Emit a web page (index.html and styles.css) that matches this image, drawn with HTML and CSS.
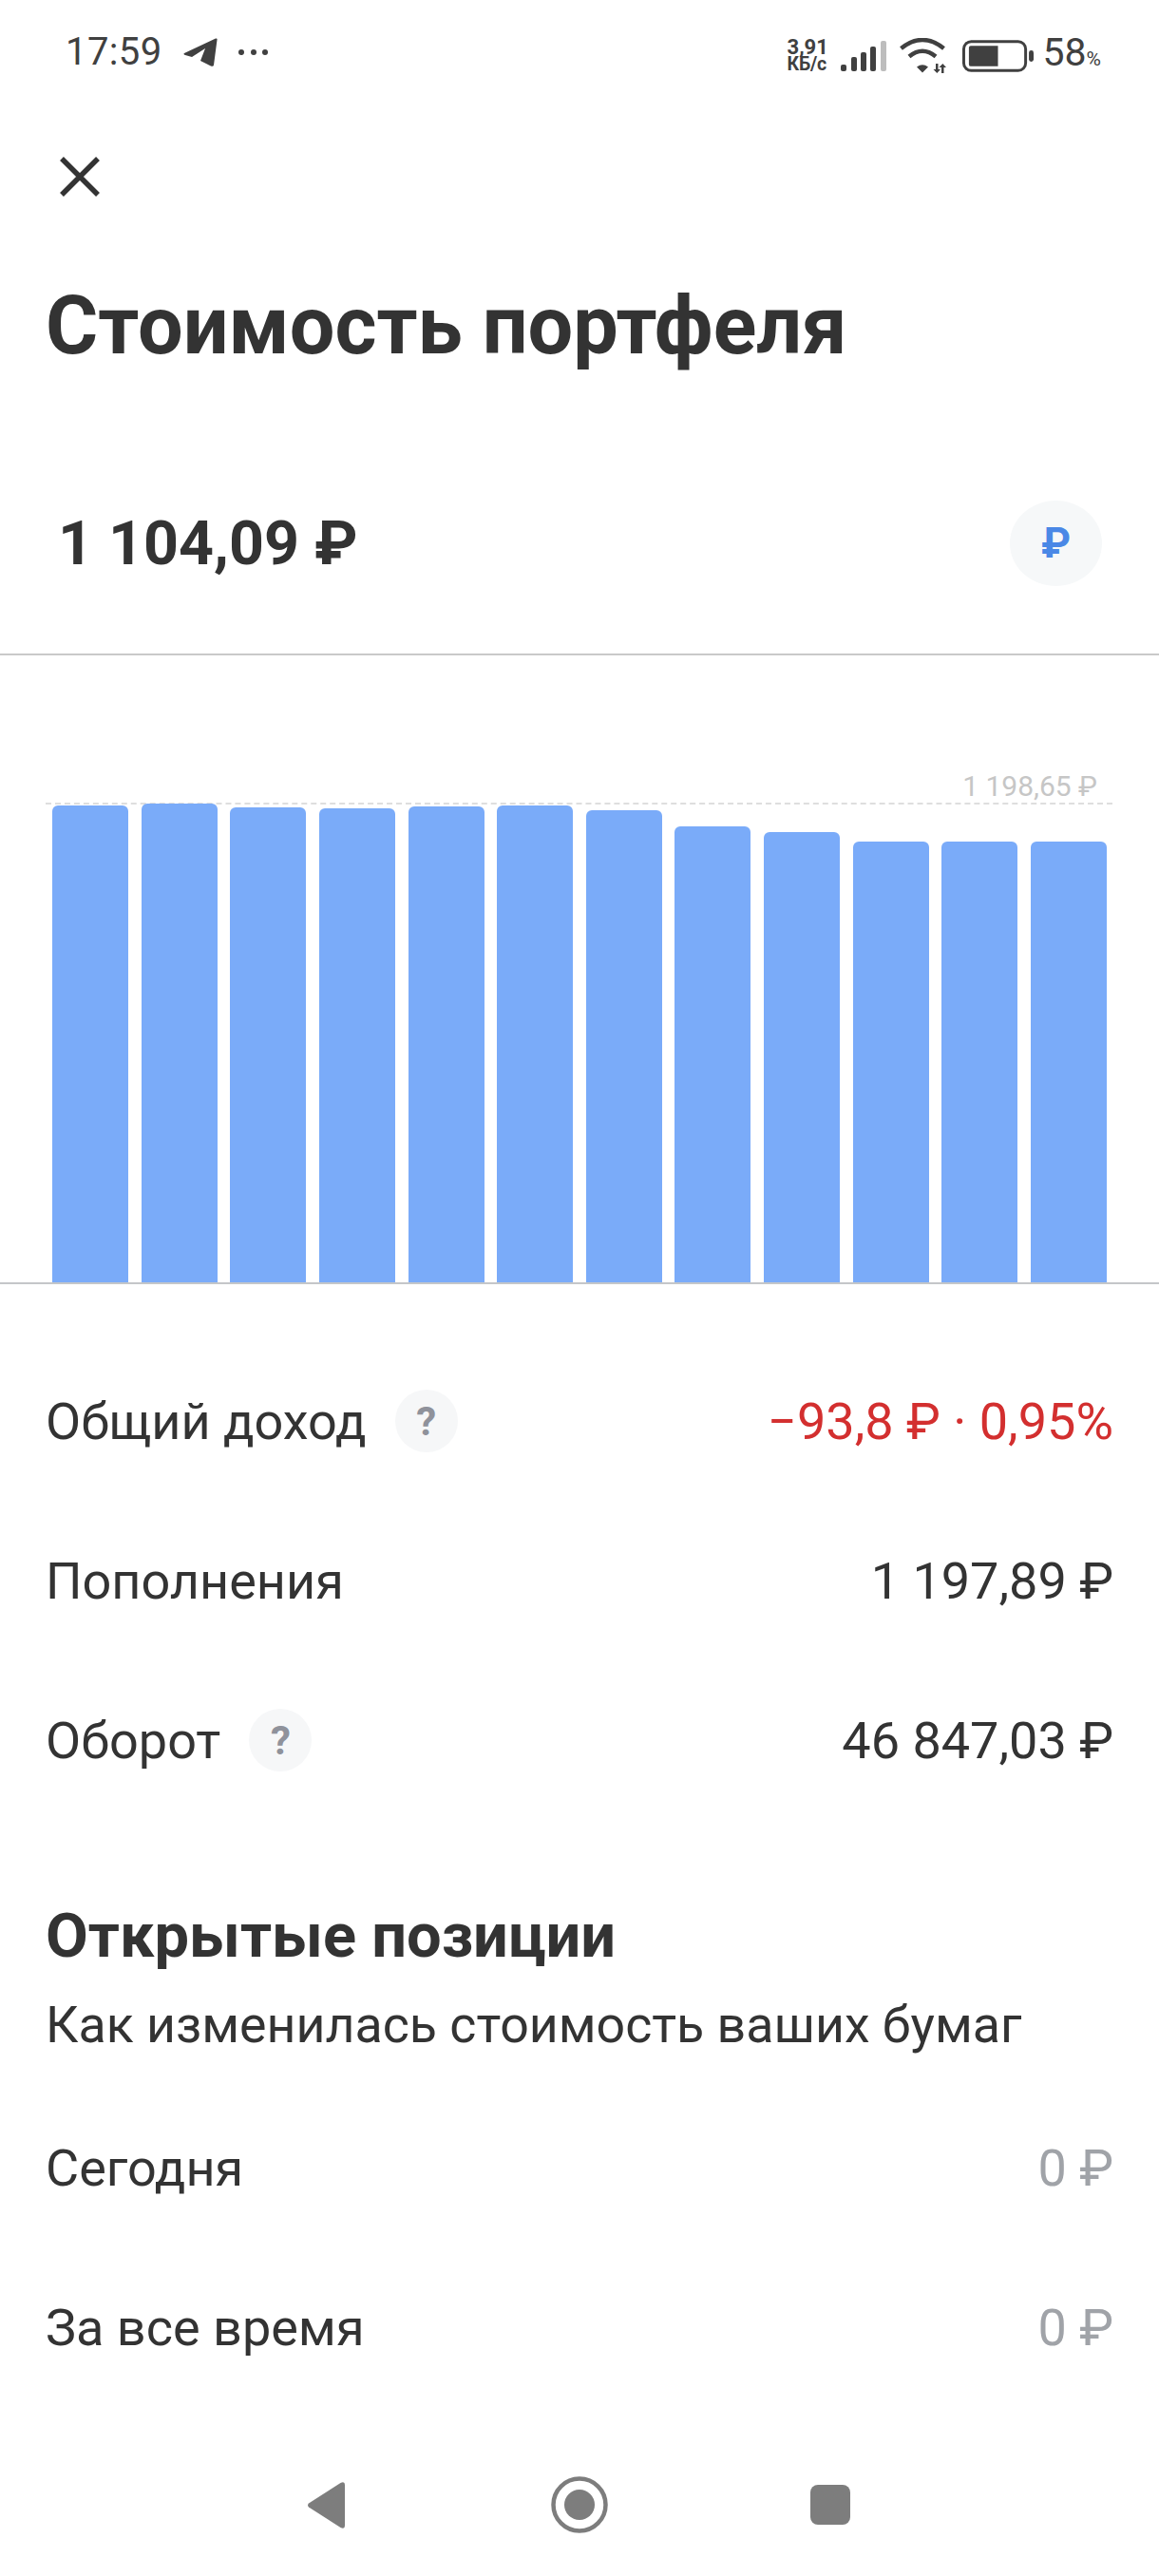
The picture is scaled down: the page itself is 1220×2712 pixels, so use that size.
FILE: index.html
```html
<!DOCTYPE html>
<html lang="ru">
<head>
<meta charset="utf-8">
<title>Стоимость портфеля</title>
<link rel="stylesheet" href="styles.css">
</head>
<body>
<div class="screen">
  <header class="status">
    <div class="status-left">
      <span class="time">17:59</span>
      <svg class="tg" viewBox="0 0 36 32"><path d="M1 17 34 1.500Q36 1 35.500 3L32 29.500Q31.500 31.500 29 30.500L18 25 23 12 9 21 2 19Q-.5 18 1 17Z" fill="#404040"/></svg>
      <svg class="dots" viewBox="0 0 33 8"><circle cx="4" cy="4" r="3" fill="#404040"/><circle cx="17" cy="4" r="3" fill="#404040"/><circle cx="29" cy="4" r="3" fill="#404040"/></svg>
    </div>
    <div class="status-right">
      <span class="speed"><span class="speed-num">3,91</span><span class="speed-unit">КБ/с</span></span>
      <svg class="signal" viewBox="0 0 48 32"><rect x="0" y="25" width="6" height="7" rx="2" fill="#404040"/><rect x="11" y="17" width="6" height="15" rx="2" fill="#404040"/><rect x="21" y="12" width="6" height="20" rx="2" fill="#404040"/><rect x="31" y="6" width="6" height="26" rx="2" fill="#404040"/><rect x="42" y="0" width="6" height="32" rx="2" fill="#bdbdbd"/></svg>
      <svg class="wifi" viewBox="0 0 50 37"><path d="M2.500 11Q25-7 47.500 11" fill="none" stroke="#404040" stroke-width="4.500"/><path d="M11 19.500Q25 8 39 19.500" fill="none" stroke="#404040" stroke-width="4.500"/><path d="M19 30.500Q25 26 31 30.500L25 36.500Z" fill="#404040"/><path d="M39 27h2.500v6h2.500l-3.700 4-3.800-4h2.500zM45 37h2.500v-6h2.500l-3.700-4-3.800 4H45z" fill="#404040"/></svg>
      <svg class="battery" viewBox="0 0 76 34"><rect x="1.500" y="1.500" width="66" height="31" rx="8" fill="none" stroke="#404040" stroke-width="3"/><path d="M9 6H38V28H9Q7 28 7 26V8Q7 6 9 6Z" fill="#404040"/><rect x="71" y="11" width="5" height="12" rx="2.500" fill="#404040"/></svg>
      <span class="pct">58<small>%</small></span>
    </div>
  </header>

  <main class="content">
    <button class="close" aria-label="Закрыть">
      <svg viewBox="0 0 42 42"><path d="M2 2 40 40M40 2 2 40" stroke="#333" stroke-width="5.500" fill="none"/></svg>
    </button>
    <h1 class="title">Стоимость портфеля</h1>

    <section class="balance">
      <span class="amount">1 104,09 ₽</span>
      <span class="currency">₽</span>
    </section>

    <section class="chart">
      <div class="peak">
        <span class="peak-label">1 198,65 ₽</span>
      </div>
      <div class="bars">
        <i class="bar" style="height:502px"></i>
        <i class="bar" style="height:504px"></i>
        <i class="bar" style="height:500px"></i>
        <i class="bar" style="height:499px"></i>
        <i class="bar" style="height:501px"></i>
        <i class="bar" style="height:502px"></i>
        <i class="bar" style="height:497px"></i>
        <i class="bar" style="height:480px"></i>
        <i class="bar" style="height:474px"></i>
        <i class="bar" style="height:464px"></i>
        <i class="bar" style="height:464px"></i>
        <i class="bar" style="height:464px"></i>
      </div>
    </section>

    <section class="rows">
      <div class="row">
        <span class="row-label">Общий доход <span class="help">?</span></span>
        <span class="row-value loss">−93,8 ₽ · 0,95%</span>
      </div>
      <div class="row">
        <span class="row-label">Пополнения</span>
        <span class="row-value">1 197,89 ₽</span>
      </div>
      <div class="row">
        <span class="row-label">Оборот <span class="help">?</span></span>
        <span class="row-value">46 847,03 ₽</span>
      </div>
    </section>

    <section class="positions">
      <h2 class="subtitle">Открытые позиции</h2>
      <p class="note">Как изменилась стоимость ваших бумаг</p>
      <div class="row">
        <span class="row-label">Сегодня</span>
        <span class="row-value muted">0 ₽</span>
      </div>
      <div class="row">
        <span class="row-label">За все время</span>
        <span class="row-value muted">0 ₽</span>
      </div>
    </section>
  </main>

  <nav class="navbar">
    <svg class="nav-back" viewBox="0 0 40 49"><path d="M1 22.500 34.500 1Q39-1 39 3V46Q39 50 34.500 48L1 26.500Q-1 24.500 1 22.500Z" fill="#7d7d7d"/></svg>
    <svg class="nav-home" viewBox="0 0 60 60"><circle cx="30" cy="30" r="27.500" fill="none" stroke="#7d7d7d" stroke-width="4.500"/><circle cx="30" cy="30" r="16" fill="#7d7d7d"/></svg>
    <span class="nav-recent"></span>
  </nav>
</div>
</body>
</html>
```

FILE: styles.css
```css
* { box-sizing: border-box; }
html, body { margin: 0; padding: 0; background: #fff; }
body { font-family: Roboto, "Liberation Sans", sans-serif; color: #333; }
.screen { width: 1220px; height: 2712px; display: flex; flex-direction: column; overflow: hidden; }

.status { height: 112px; flex: none; display: flex; justify-content: space-between; align-items: flex-start; padding: 36px 61px 0 69px; color: #404040; }
.status-left, .status-right { display: flex; align-items: center; }
.time { font-size: 40px; line-height: 38px; letter-spacing: .4px; }
.tg { width: 36px; height: 32px; margin-left: 22px; }
.dots { width: 33px; height: 8px; margin-left: 21px; }
.speed { display: flex; flex-direction: column; width: 46px; font-weight: 700; white-space: nowrap; }
.speed-num { font-size: 22px; line-height: 19px; }
.speed-unit { font-size: 19.500px; line-height: 18px; letter-spacing: -.2px; }
.signal { width: 48px; height: 32px; margin-left: 10px; }
.wifi { width: 50px; height: 37px; margin-left: 13px; }
.battery { width: 75px; height: 34px; margin-left: 17px; }
.pct { font-size: 41px; line-height: 38px; margin-left: 10px; }
.pct small { font-size: 21px; }

.content { flex: 1; padding: 0 48px; }
.close { display: block; width: 42px; height: 42px; margin: 53px 0 0 15px; padding: 0; border: 0; background: none; }
.close svg { display: block; width: 42px; height: 42px; }
.title { margin: 89px 0 0; font-size: 84.500px; line-height: 96px; font-weight: 700; white-space: nowrap; }

.balance { display: flex; justify-content: space-between; align-items: center; height: 90px; margin: 135px 0 0; padding: 0 12px 0 13px; }
.amount { font-size: 64.500px; line-height: 72px; font-weight: 700; }
.currency { width: 97px; height: 90px; border-radius: 50%; background: #f6f8f9; color: #4a88e6; font-size: 44px; font-weight: 700; display: flex; align-items: center; justify-content: center; }

.chart { margin: 71px -48px 0; border-top: 2px solid #c9c9c9; border-bottom: 2px solid #c4c6c9; height: 664px; padding-top: 118px; }
.peak { height: 39px; margin: 0 49px 0 48px; display: flex; justify-content: flex-end; align-items: flex-end; border-bottom: 2px dashed #dedede; padding: 0 16px 0 0; }
.peak-label { font-size: 30px; line-height: 34px; color: #c6c6c6; }
.bars { height: 505px; margin: -2px 55px 0; display: flex; justify-content: space-between; align-items: flex-end; }
.bar { display: block; width: 80px; background: #7aabf9; border-radius: 6px 6px 0 0; }

.rows { margin-top: 60px; }
.row { display: flex; justify-content: space-between; align-items: center; height: 168px; font-size: 54px; }
.row-label { display: flex; align-items: center; gap: 30px; }
.help { width: 66px; height: 66px; border-radius: 50%; background: #f6f7f8; color: #8f929b; font-size: 42px; font-weight: 700; display: flex; align-items: center; justify-content: center; }
.loss { color: #d32f2f; }
.muted { color: #a0a3a8; }

.positions { margin-top: 86px; }
.subtitle { margin: 0; font-size: 65px; line-height: 72px; font-weight: 700; }
.note { margin: 28px 0 36px; font-size: 53.700px; line-height: 60px; white-space: nowrap; }

.navbar { flex: none; height: 132px; display: flex; align-items: center; padding: 0 0 18px 324px; }
.nav-back { width: 40px; height: 49px; }
.nav-home { width: 60px; height: 60px; margin-left: 216px; }
.nav-recent { width: 42px; height: 42px; margin-left: 213px; border-radius: 8px; background: #7d7d7d; }
```
